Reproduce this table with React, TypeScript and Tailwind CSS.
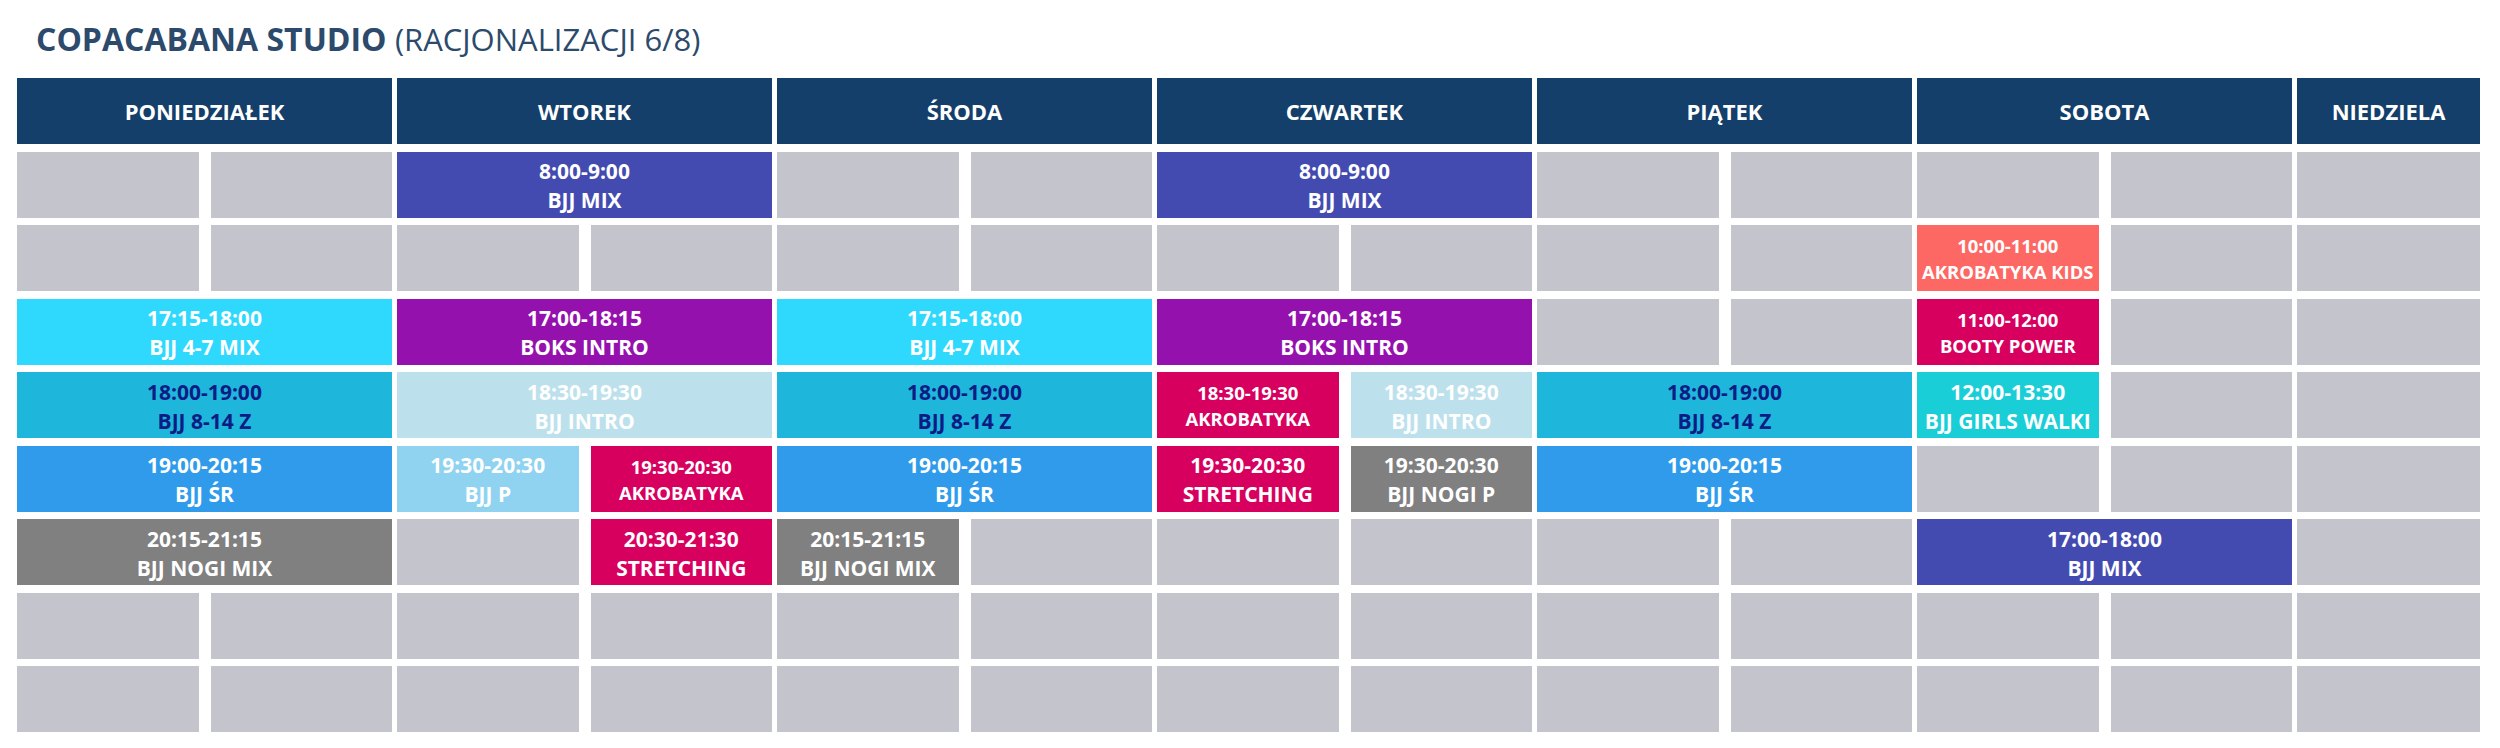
type Ev = { t: string; n: string; c: string; small?: boolean };
type Slot = Ev | [Ev | null, Ev | null];

const IND = "bg-[#434bb1] text-white";
const CYAN = "bg-[#2fd9fd] text-white";
const PURP = "bg-[#9511ad] text-white";
const TEAL = "bg-[#1eb6db] text-[#0b1c85]";
const PALE = "bg-[#bde1ec] text-white";
const BLUE = "bg-[#2f9bea] text-white";
const SKY = "bg-[#8fd3f1] text-white";
const MAG = "bg-[#d7005f] text-white";
const GREY = "bg-[#808080] text-white";
const SALM = "bg-[#fd6864] text-white";
const TURQ = "bg-[#19ced6] text-white";

const days = ["PONIEDZIAŁEK", "WTOREK", "ŚRODA", "CZWARTEK", "PIĄTEK", "SOBOTA"];

const E: [null, null] = [null, null];

const bjjMix: Ev = { t: "8:00-9:00", n: "BJJ MIX", c: IND };
const kids47: Ev = { t: "17:15-18:00", n: "BJJ 4-7 MIX", c: CYAN };
const boks: Ev = { t: "17:00-18:15", n: "BOKS INTRO", c: PURP };
const kids814: Ev = { t: "18:00-19:00", n: "BJJ 8-14 Z", c: TEAL };
const sr: Ev = { t: "19:00-20:15", n: "BJJ ŚR", c: BLUE };

const rows: Slot[][] = [
  [E, bjjMix, E, bjjMix, E, E],
  [E, E, E, E, E, [{ t: "10:00-11:00", n: "AKROBATYKA KIDS", c: SALM, small: true }, null]],
  [kids47, boks, kids47, boks, E, [{ t: "11:00-12:00", n: "BOOTY POWER", c: MAG, small: true }, null]],
  [
    kids814,
    { t: "18:30-19:30", n: "BJJ INTRO", c: PALE },
    kids814,
    [
      { t: "18:30-19:30", n: "AKROBATYKA", c: MAG, small: true },
      { t: "18:30-19:30", n: "BJJ INTRO", c: PALE },
    ],
    kids814,
    [{ t: "12:00-13:30", n: "BJJ GIRLS WALKI", c: TURQ }, null],
  ],
  [
    sr,
    [
      { t: "19:30-20:30", n: "BJJ P", c: SKY },
      { t: "19:30-20:30", n: "AKROBATYKA", c: MAG, small: true },
    ],
    sr,
    [
      { t: "19:30-20:30", n: "STRETCHING", c: MAG },
      { t: "19:30-20:30", n: "BJJ NOGI P", c: GREY },
    ],
    sr,
    E,
  ],
  [
    { t: "20:15-21:15", n: "BJJ NOGI MIX", c: GREY },
    [null, { t: "20:30-21:30", n: "STRETCHING", c: MAG }],
    [{ t: "20:15-21:15", n: "BJJ NOGI MIX", c: GREY }, null],
    E,
    E,
    { t: "17:00-18:00", n: "BJJ MIX", c: IND },
  ],
  [E, E, E, E, E, E],
  [E, E, E, E, E, E],
];

function Cell({ ev }: { ev: Ev | null }) {
  if (!ev) return <div className="h-[66px] bg-[#c3c4cc]" />;
  return (
    <div
      className={`h-[66px] flex flex-col items-center justify-center text-center font-bold whitespace-nowrap ${ev.c} ${
        ev.small ? "pt-[2px] text-[18.5px] leading-[26px]" : "pt-[3px] text-[21px] leading-[29px]"
      }`}
    >
      <span>{ev.t}</span>
      <span>{ev.n}</span>
    </div>
  );
}

export default function App() {
  return (
    <div className="w-[2500px] h-[748px] bg-white font-['Open_Sans',sans-serif]">
      <h1 className="pl-[36px] pt-[17px] text-[32px] leading-[44px] text-[#2c4a6b]">
        <span className="font-bold">COPACABANA STUDIO</span>{" "}
        <span className="font-normal text-[31px]">(RACJONALIZACJI 6/8)</span>
      </h1>

      <div className="mt-[17px] px-[17px] grid grid-cols-[repeat(6,375px)_183px] gap-x-[5px] gap-y-[7.5px]">
        {/* day headers */}
        {[...days, "NIEDZIELA"].map((d) => (
          <div
            key={d}
            className="h-[66px] bg-[#143f6b] text-white font-bold text-[22px] flex items-center justify-center"
          >
            {d}
          </div>
        ))}

        {/* schedule rows */}
        {rows.map((row, ri) => (
          <div key={ri} className="contents">
            {row.map((slot, di) =>
              Array.isArray(slot) ? (
                <div key={di} className="grid grid-cols-2 gap-x-[12px]">
                  <Cell ev={slot[0]} />
                  <Cell ev={slot[1]} />
                </div>
              ) : (
                <Cell key={di} ev={slot} />
              )
            )}
            <Cell ev={null} />
          </div>
        ))}
      </div>
    </div>
  );
}
